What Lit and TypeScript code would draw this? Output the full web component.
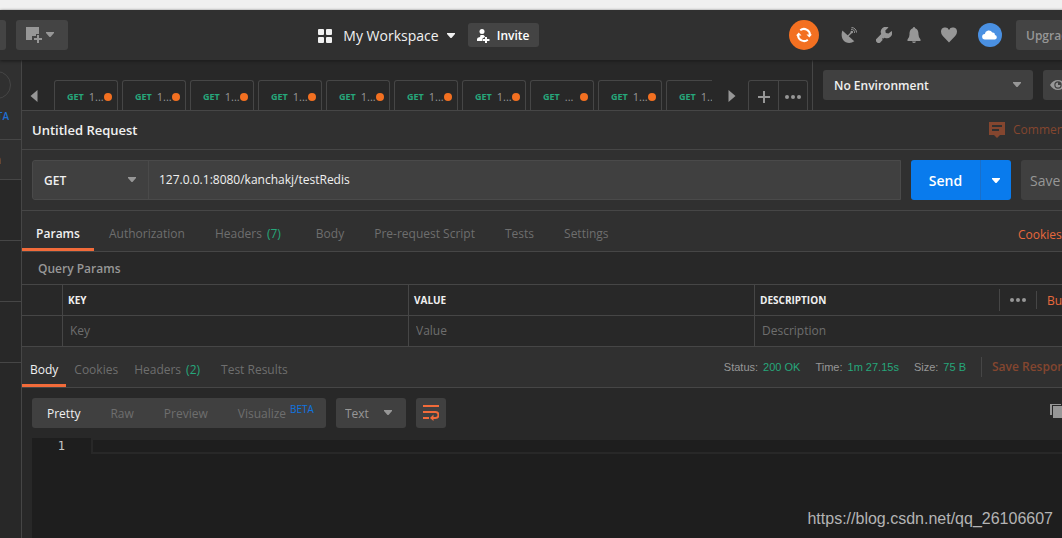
import { LitElement, html, css, svg } from "lit";
import { customElement, property } from "lit/decorators.js";

const shapes: Record<string, { box: string; body: unknown }> = {
  caret: { box: "0 0 8 6", body: svg`<path d="M0 0h8v1L4.5 5h-1L0 1z"/>` },
  left: { box: "0 0 8 12", body: svg`<path d="M7.5 0v12L.5 6z"/>` },
  right: { box: "0 0 8 12", body: svg`<path d="M.5 0v12l7-6z"/>` },
  grid: {
    box: "0 0 14 14",
    body: svg`<rect width="6" height="6" rx="1"/><rect x="8" width="6" height="6" rx="1"/><rect y="8" width="6" height="6" rx="1"/><rect x="8" y="8" width="6" height="6" rx="1"/>`,
  },
  newWindow: {
    box: "0 0 16 16",
    body: svg`<path d="M0 0h13v7h-3v2H6v4H0z"/><path d="M11 8h2v3h3v2h-3v3h-2v-3H8v-2h3z"/>`,
  },
  invite: {
    box: "0 0 13 14",
    body: svg`<circle cx="5" cy="2.500" r="2.500"/><path d="M3.500 6h3Q8 7 8 8L5.500 9.500V12H0v-2q0-1.500 3-2z"/><path d="M8 8h2v2h2.500v2H10v2H8v-2H6v-2h2z"/>`,
  },
  sync: {
    box: "0 0 16 16",
    body: svg`<path d="M4.200 3.300A6 6 0 0 1 14 8M11.800 12.700A6 6 0 0 1 2 8" fill="none" stroke="currentColor" stroke-width="2"/><path d="M10.500 7.500H16L13.300 10.500zM5.500 8.500H0L2.700 5.500z"/>`,
  },
  satellite: {
    box: "0 0 16 16",
    body: svg`<path d="M1.300 3.500 13.300 14.200Q9.500 17 4.800 15.300-1 12 1.300 3.500z"/><path d="M6.500 9.500 10.500 5.500" stroke="currentColor" stroke-width="1.300"/><circle cx="10.800" cy="5" r="1.300"/><path d="M10 2.300a3 3 0 0 1 3.500 3.600M10.500.500a5 5 0 0 1 5 5" fill="none" stroke="currentColor" stroke-width="1"/>`,
  },
  wrench: {
    box: "0 0 16 16",
    body: svg`<path d="M12.500.400A5.200 5.200 0 0 0 5.200 7L.600 11.700a2.200 2.200 0 0 0 0 3.200l.500.500a2.200 2.200 0 0 0 3.200 0L6.600 13l-.500-1.800 1.600.300.900-.800A5.200 5.200 0 0 0 15.700 4L12.500 6.500 9.800 5.900 9.300 3.500z"/>`,
  },
  bell: {
    box: "0 0 16 16",
    body: svg`<path d="M8 0q1 0 1.200 1.200C12 2 12.500 5 12.500 7.500q0 3 2 5V14H1.500v-1.500q2-2 2-5C3.500 5 4 2 6.800 1.200 7 0 8 0 8 0zM6 14.500h4Q9.500 16 8 16T6 14.500z"/>`,
  },
  heart: {
    box: "0 0 16 16",
    body: svg`<path d="M8 15.500 1.800 9Q0 7 0 4.800A4.200 4.200 0 0 1 8 2.900a4.200 4.200 0 0 1 8 1.900Q16 7 14.200 9z"/>`,
  },
  cloud: {
    box: "0 0 16 10",
    body: svg`<path d="M3 9.500A2.700 2.700 0 0 1 2.800 4 4 4 0 0 1 10.300 2.600 2.500 2.500 0 0 1 13 5a2.300 2.300 0 0 1 0 4.500z"/>`,
  },
  plus: { box: "0 0 12 12", body: svg`<path d="M5 0h2v5h5v2H7v5H5V7H0V5h5z"/>` },
  dots: {
    box: "0 0 16 4",
    body: svg`<circle cx="2" cy="2" r="2"/><circle cx="8" cy="2" r="2"/><circle cx="14" cy="2" r="2"/>`,
  },
  eye: {
    box: "0 0 16 10",
    body: svg`<path fill-rule="evenodd" d="M8 0q5 0 8 5-3 5-8 5T0 5q3-5 8-5zm0 1.300a3.700 3.700 0 1 0 0 7.400 3.700 3.700 0 0 0 0-7.400z"/><path d="M8 2.500a2.500 2.500 0 1 0 2.500 2.500H8z"/>`,
  },
  comment: {
    box: "0 0 16 16",
    body: svg`<path fill-rule="evenodd" d="M0 0h16v13h-5l-3 3-3-3H0zM3 3v2h10V3zm0 4v2h7V7z"/>`,
  },
  wrap: {
    box: "0 0 16 16",
    body: svg`<path d="M0 1h16M0 7h12.500a3 3 0 0 1 0 6H10M0 13h6" fill="none" stroke="currentColor" stroke-width="2"/><path d="M10.500 9.500v6.500L7 13z"/>`,
  },
  copy: {
    box: "0 0 14 14",
    body: svg`<path d="M0 0h11v1H2v10H0z"/><path d="M3 2h11v12H3z"/>`,
  },
};

const icon = (name: string, width: number, height: number) => svg`
  <svg width=${width} height=${height} viewBox=${shapes[name].box} fill="currentColor" aria-hidden="true">
    ${shapes[name].body}
  </svg>`;

const base = css`
  * {
    box-sizing: border-box;
  }
  svg {
    display: block;
    flex: none;
  }
  button,
  select,
  input {
    margin: 0;
    padding: 0;
    border: 0;
    background: none;
    color: inherit;
    font: inherit;
    outline: none;
    appearance: none;
  }
  button {
    display: flex;
    align-items: center;
    justify-content: center;
    flex: none;
    white-space: nowrap;
  }
  a {
    color: #e8683c;
    text-decoration: none;
    white-space: nowrap;
  }
`;

@customElement("drop-down")
class DropDown extends LitElement {
  @property() label = "";
  @property() value = "";

  static styles = [
    base,
    css`
      :host {
        display: grid;
        align-items: center;
        border-radius: 3px;
        background: #404040;
        color: #979797;
      }
      select {
        grid-area: 1 / 1;
        width: 100%;
        height: 100%;
        padding: 2px 30px 0 var(--start, 11px);
        color: var(--ink, #f0f0f0);
      }
      svg {
        grid-area: 1 / 1;
        justify-self: end;
        margin-right: var(--end, 12px);
        pointer-events: none;
      }
    `,
  ];

  render() {
    return html`<select aria-label=${this.label}>
        <option>${this.value}</option></select
      >${icon("caret", 8, 6)}`;
  }
}

@customElement("top-bar")
class TopBar extends LitElement {
  static styles = [
    base,
    css`
      :host {
        display: flex;
        align-items: center;
        justify-content: space-between;
        height: 50px;
        background: #303030;
        color: #979797;
        box-shadow: 0 1px 3px #1a1a1a;
        z-index: 1;
      }
      .group {
        display: flex;
        align-items: center;
      }
      .box {
        height: 30px;
        border-radius: 3px;
        background: #444;
      }
      .edge {
        width: 6px;
        margin-right: 10px;
        border-radius: 0 3px 3px 0;
      }
      .new {
        width: 52px;
        gap: 4px;
        padding-right: 4px;
      }
      .workspace {
        gap: 8px;
        margin-right: 13px;
        padding-top: 2px;
        color: #f0f0f0;
        font-size: 14px;
        font-weight: 500;
      }
      .workspace svg:first-child {
        margin-right: 3px;
      }
      .invite {
        width: 71px;
        height: 24px;
        gap: 7px;
        padding-top: 2px;
        color: #fff;
        font-weight: 600;
      }
      .round {
        border-radius: 50%;
        color: #fff;
      }
      .sync {
        width: 30px;
        height: 30px;
        margin-right: 22px;
        background: #f37021;
      }
      .tools {
        gap: 19px;
        margin-right: 21px;
      }
      .tools button:nth-child(2) {
        margin-right: -5px;
      }
      .account {
        width: 24px;
        height: 24px;
        margin-right: 14px;
        background: #4a90e2;
      }
      .upgrade {
        width: 84px;
        justify-content: flex-start;
        padding: 2px 0 0 10px;
        font-size: 12px;
        font-weight: 600;
      }
    `,
  ];

  render() {
    return html`
      <div class="group">
        <button class="box edge" aria-label="Import"></button>
        <button class="box new" aria-label="New window">${icon("newWindow", 16, 16)}${icon("caret", 8, 6)}</button>
      </div>
      <div class="group">
        <button class="workspace">${icon("grid", 14, 14)}My Workspace${icon("caret", 8, 6)}</button>
        <button class="box invite">${icon("invite", 13, 14)}Invite</button>
      </div>
      <div class="group">
        <button class="round sync" aria-label="Sync">${icon("sync", 16, 16)}</button>
        <div class="group tools">
          <button aria-label="Capture">${icon("satellite", 16, 16)}</button>
          <button aria-label="Settings">${icon("wrench", 16, 16)}</button>
          <button aria-label="Notifications">${icon("bell", 16, 16)}</button>
          <button aria-label="Favourites">${icon("heart", 16, 16)}</button>
        </div>
        <button class="round account" aria-label="Account">${icon("cloud", 16, 10)}</button>
        <button class="box upgrade">Upgrade</button>
      </div>
    `;
  }
}

@customElement("side-bar")
class SideBar extends LitElement {
  static styles = [
    base,
    css`
      :host {
        display: flex;
        flex-direction: column;
        width: 22px;
        flex: none;
        overflow: hidden;
        border-right: 1px solid #464646;
        background: #282828;
      }
      .cell {
        display: flex;
        justify-content: flex-end;
        flex: none;
        height: 61px;
        border-bottom: 1px solid #464646;
      }
      .head {
        flex-direction: column;
        justify-content: flex-start;
        align-items: flex-end;
        gap: 10px;
        height: 80px;
        padding: 11px 10px 0 0;
        background: #303030;
      }
      .search {
        width: 28px;
        height: 28px;
        flex: none;
        border: 1px solid #464646;
        border-radius: 50%;
      }
      .beta {
        color: #1f6fd0;
        font-size: 10px;
        line-height: 14px;
        padding-right: 2px;
        font-weight: 600;
      }
      .trash {
        height: 40px;
        align-items: center;
        padding-right: 20px;
        background: #303030;
        color: #979797;
      }
    `,
  ];

  render() {
    return html`
      <div class="cell head">
        <button class="search" aria-label="Search"></button>
        <span class="beta">BETA</span>
      </div>
      <div class="cell trash">Trash</div>
      <div class="cell"></div>
      <div class="cell"></div>
      <div class="cell"></div>
    `;
  }
}

@customElement("tab-strip")
class TabStrip extends LitElement {
  private names = ["1...", "1...", "1...", "1...", "1...", "1...", "1...", "...", "1...", "1..."];

  static styles = [
    base,
    css`
      :host {
        display: flex;
        align-items: flex-end;
        height: 51px;
        border-bottom: 1px solid #464646;
        background: #282828;
        color: #979797;
      }
      .arrow {
        width: 32px;
        height: 28px;
        padding-right: 8px;
      }
      .next {
        width: 36px;
        padding-left: 4px;
        padding-right: 0;
      }
      .tabs {
        display: flex;
        flex: 1;
        gap: 4px;
        min-width: 0;
        overflow: hidden;
      }
      .tab {
        width: 64px;
        height: 30px;
        justify-content: flex-start;
        gap: 5px;
        padding: 3px 5px 0 12px;
        border: 1px solid #464646;
        border-bottom: 0;
        border-radius: 3px 3px 0 0;
      }
      .verb {
        color: #26a77b;
        font-size: 9px;
        font-weight: 700;
      }
      .name {
        width: 15px;
        font-size: 11px;
        text-align: left;
      }
      .dot {
        width: 8px;
        height: 8px;
        flex: none;
        margin-left: -5px;
        border-radius: 50%;
        background: #f37021;
      }
      .more {
        display: flex;
        height: 30px;
        margin-right: 4px;
        border: 1px solid #464646;
        border-bottom: 0;
        border-radius: 3px 3px 0 0;
      }
      .more button {
        width: 29px;
        padding-top: 2px;
      }
      .more button + button {
        border-left: 1px solid #464646;
      }
      .environment {
        display: flex;
        gap: 10px;
        width: 288px;
        height: 50px;
        padding: 10px;
        border-left: 1px solid #464646;
      }
      .environment drop-down {
        width: 210px;
        flex: none;
        font-size: 12px;
        font-weight: 600;
      }
      .eye {
        width: 36px;
        justify-content: flex-start;
        padding-left: 7px;
        border-radius: 3px;
        background: #404040;
      }
    `,
  ];

  render() {
    return html`
      <button class="arrow" aria-label="Previous tabs">${icon("left", 8, 12)}</button>
      <div class="tabs">
        ${this.names.map(
          (name) => html`<button class="tab">
            <span class="verb">GET</span><span class="name">${name}</span><span class="dot"></span>
          </button>`,
        )}
      </div>
      <button class="arrow next" aria-label="Next tabs">${icon("right", 8, 12)}</button>
      <div class="more">
        <button aria-label="New tab">${icon("plus", 12, 12)}</button>
        <button aria-label="Tab options">${icon("dots", 16, 4)}</button>
      </div>
      <div class="environment">
        <drop-down label="Environment" value="No Environment"></drop-down>
        <button class="eye" aria-label="Environment quick look">${icon("eye", 16, 10)}</button>
      </div>
    `;
  }
}

@customElement("request-pane")
class RequestPane extends LitElement {
  static styles = [
    base,
    css`
      :host {
        display: block;
      }
      .row {
        display: flex;
        border-bottom: 1px solid #464646;
        background: #303030;
      }
      .title {
        align-items: center;
        justify-content: space-between;
        height: 39px;
        padding-left: 10px;
      }
      h1 {
        margin: 0;
        color: #f0f0f0;
        font-size: 13px;
        font-weight: 600;
      }
      .comments {
        width: 111px;
        justify-content: flex-start;
        gap: 8px;
        color: #84462f;
      }
      .address {
        gap: 10px;
        padding: 10px 0 10px 10px;
      }
      .url {
        display: flex;
        flex: 1;
        height: 40px;
        border: 1px solid #4a4a4a;
        border-radius: 3px 0 0 3px;
        background: #404040;
      }
      .url drop-down {
        width: 115px;
        font-weight: 600;
      }
      .url input {
        flex: 1;
        min-width: 0;
        padding: 0 10px;
        border-left: 1px solid #4a4a4a;
        color: #f0f0f0;
      }
      .send {
        display: flex;
        width: 100px;
        border-radius: 3px;
        background: #097bed;
        color: #fff;
        font-size: 14px;
        font-weight: 600;
      }
      .send button {
        width: 69px;
        padding-top: 2px;
      }
      .send button + button {
        width: 30px;
        border-left: 1px solid #1a6fc9;
      }
      .save {
        width: 79px;
        justify-content: flex-start;
        padding: 2px 0 0 9px;
        border-radius: 3px 0 0 3px;
        background: #404040;
        color: #979797;
        font-size: 14px;
      }
      .sections {
        height: 41px;
        color: #6e6e6e;
      }
      .sections button {
        padding: 9px 15px 0;
        border-bottom: 3px solid transparent;
      }
      .sections .active {
        border-color: #f26b3a;
        color: #f0f0f0;
        font-weight: 600;
        width: 72px;
      }
      .sections .counted {
        padding-right: 20px;
      }
      .count {
        margin-left: 5px;
        color: #26a77b;
        font-weight: 500;
      }
      .sections a {
        width: 82px;
        margin-left: auto;
        padding-top: 16px;
      }
      .caption {
        height: 33px;
        padding-left: 16px;
        border-bottom: 1px solid #464646;
        color: #979797;
        font-weight: 600;
        line-height: 34px;
      }
      table {
        width: 100%;
        border-collapse: separate;
        border-spacing: 0;
        table-layout: fixed;
      }
      th,
      td {
        height: 31px;
        padding: 0;
        border-bottom: 1px solid #464646;
        border-left: 1px solid #464646;
        text-align: left;
      }
      th:first-child,
      td:first-child {
        width: 40px;
        border-left: 0;
      }
      th {
        padding-left: 5px;
        color: #f0f0f0;
        font-size: 10px;
        font-weight: 700;
      }
      td input {
        width: 100%;
        padding-left: 7px;
      }
      ::placeholder {
        color: #6e6e6e;
        opacity: 1;
      }
      .last {
        display: flex;
        align-items: center;
        justify-content: space-between;
      }
      .actions {
        display: flex;
        align-items: center;
        width: 101px;
        height: 22px;
        border-left: 1px solid #464646;
        color: #979797;
        font-size: 12px;
        font-weight: 400;
      }
      .actions button {
        width: 36px;
      }
      .actions a {
        padding: 2px 0 0 10px;
        border-left: 1px solid #464646;
      }
    `,
  ];

  render() {
    return html`
      <div class="row title">
        <h1>Untitled Request</h1>
        <button class="comments">${icon("comment", 16, 16)}Comments</button>
      </div>
      <div class="row address">
        <div class="url">
          <drop-down label="Method" value="GET"></drop-down>
          <input aria-label="Request URL" value="127.0.0.1:8080/kanchakj/testRedis" />
        </div>
        <div class="send">
          <button>Send</button>
          <button aria-label="Send options">${icon("caret", 8, 6)}</button>
        </div>
        <button class="save">Save</button>
      </div>
      <div class="row sections">
        <button class="active">Params</button>
        <button>Authorization</button>
        <button class="counted">Headers <span class="count">(7)</span></button>
        <button>Body</button>
        <button>Pre-request Script</button>
        <button>Tests</button>
        <button>Settings</button>
        <a href="#cookies">Cookies</a>
      </div>
      <div class="caption">Query Params</div>
      <table>
        <tr>
          <th></th>
          <th>KEY</th>
          <th>VALUE</th>
          <th>
            <div class="last">
              DESCRIPTION
              <div class="actions">
                <button aria-label="Column options">${icon("dots", 16, 4)}</button>
                <a href="#bulk">Bulk Edit</a>
              </div>
            </div>
          </th>
        </tr>
        <tr>
          <td></td>
          <td><input aria-label="Key" placeholder="Key" /></td>
          <td><input aria-label="Value" placeholder="Value" /></td>
          <td><input aria-label="Description" placeholder="Description" /></td>
        </tr>
      </table>
    `;
  }
}

@customElement("response-pane")
class ResponsePane extends LitElement {
  static styles = [
    base,
    css`
      :host {
        display: flex;
        flex-direction: column;
        flex: 1;
      }
      .sections {
        display: flex;
        height: 41px;
        border-bottom: 1px solid #464646;
        background: #303030;
        color: #6e6e6e;
      }
      .sections button {
        padding: 9px 8px 0;
        border-bottom: 3px solid transparent;
      }
      .sections .active {
        border-color: #f26b3a;
        color: #f0f0f0;
        font-weight: 500;
      }
      .sections .results {
        padding-left: 13px;
      }
      .count {
        margin-left: 5px;
        color: #26a77b;
        font-weight: 500;
      }
      .stats {
        display: flex;
        align-items: center;
        gap: 5px;
        margin-left: auto;
        color: #979797;
        font-family: "Liberation Sans", sans-serif;
        font-size: 11px;
      }
      .stats b {
        margin-right: 10px;
        color: #26a77b;
        font-weight: 400;
      }
      .stats a {
        width: 119px;
        padding-left: 10px;
        border-left: 1px solid #464646;
        color: #84462f;
        font-family: "Open Sans", sans-serif;
        font-size: 12px;
        font-weight: 600;
        line-height: 20px;
      }
      .tools {
        display: flex;
        gap: 10px;
        padding: 10px 0 10px 10px;
        color: #979797;
      }
      .modes {
        display: flex;
        height: 30px;
        padding-right: 12px;
        border-radius: 3px;
        background: #404040;
        color: #6e6e6e;
      }
      .modes button {
        padding: 2px 15px 0;
      }
      .modes .active {
        color: #f0f0f0;
        font-weight: 500;
      }
      .modes .visual {
        padding-right: 0;
      }
      .beta {
        align-self: flex-start;
        margin-left: 4px;
        padding-top: 4px;
        color: #0f74e0;
        font-size: 10px;
        font-weight: 500;
        line-height: 14px;
      }
      .tools drop-down {
        width: 70px;
        --start: 9px;
        --end: 14px;
        --ink: #979797;
      }
      .wrap {
        width: 30px;
        border-radius: 3px;
        background: #404040;
        color: #f26b3a;
      }
      .copy {
        margin-left: auto;
        width: 50px;
        justify-content: flex-start;
        padding-bottom: 4px;
      }
      .editor {
        display: flex;
        flex: 1;
        margin-left: 10px;
        background: #1e1e1e;
        color: #c6c6c6;
        font-family: "DejaVu Sans Mono", monospace;
      }
      .gutter {
        width: 59px;
        padding-right: 26px;
        line-height: 16px;
        text-align: right;
      }
      .line {
        flex: 1;
        height: 16px;
        border: 2px solid #282828;
      }
    `,
  ];

  render() {
    return html`
      <div class="sections">
        <button class="active">Body</button>
        <button>Cookies</button>
        <button>Headers <span class="count">(2)</span></button>
        <button class="results">Test Results</button>
        <div class="stats">
          <span>Status:</span><b>200 OK</b> <span>Time:</span><b>1m 27.15s</b> <span>Size:</span><b>75 B</b>
          <a href="#save">Save Response</a>
        </div>
      </div>
      <div class="tools">
        <div class="modes">
          <button class="active">Pretty</button>
          <button>Raw</button>
          <button>Preview</button>
          <button class="visual">Visualize</button>
          <span class="beta">BETA</span>
        </div>
        <drop-down label="Format" value="Text"></drop-down>
        <button class="wrap" aria-label="Wrap lines">${icon("wrap", 16, 16)}</button>
        <button class="copy" aria-label="Copy">${icon("copy", 14, 14)}</button>
      </div>
      <div class="editor">
        <div class="gutter">1</div>
        <div class="line"></div>
      </div>
    `;
  }
}

@customElement("app-root")
class AppRoot extends LitElement {
  static styles = [
    base,
    css`
      :host {
        display: block;
        position: relative;
        overflow: hidden;
        font: 12px/16px "Open Sans", sans-serif;
      }
      .shell {
        display: flex;
        flex-direction: column;
        width: calc(100% + 38px);
        min-height: 100vh;
        border-top: 10px solid #f0f0f0;
        background: #282828;
      }
      .body {
        display: flex;
        flex: 1;
      }
      main {
        display: flex;
        flex: 1;
        flex-direction: column;
        min-width: 0;
      }
      .mark {
        position: absolute;
        right: 9px;
        bottom: 10px;
        color: #b4b4b4;
        font: 16px/18px "Liberation Sans", sans-serif;
      }
    `,
  ];

  render() {
    return html`
      <div class="shell">
        <top-bar></top-bar>
        <div class="body">
          <side-bar></side-bar>
          <main>
            <tab-strip></tab-strip>
            <request-pane></request-pane>
            <response-pane></response-pane>
          </main>
        </div>
      </div>
      <div class="mark">https://blog.csdn.net/qq_26106607</div>
    `;
  }
}
